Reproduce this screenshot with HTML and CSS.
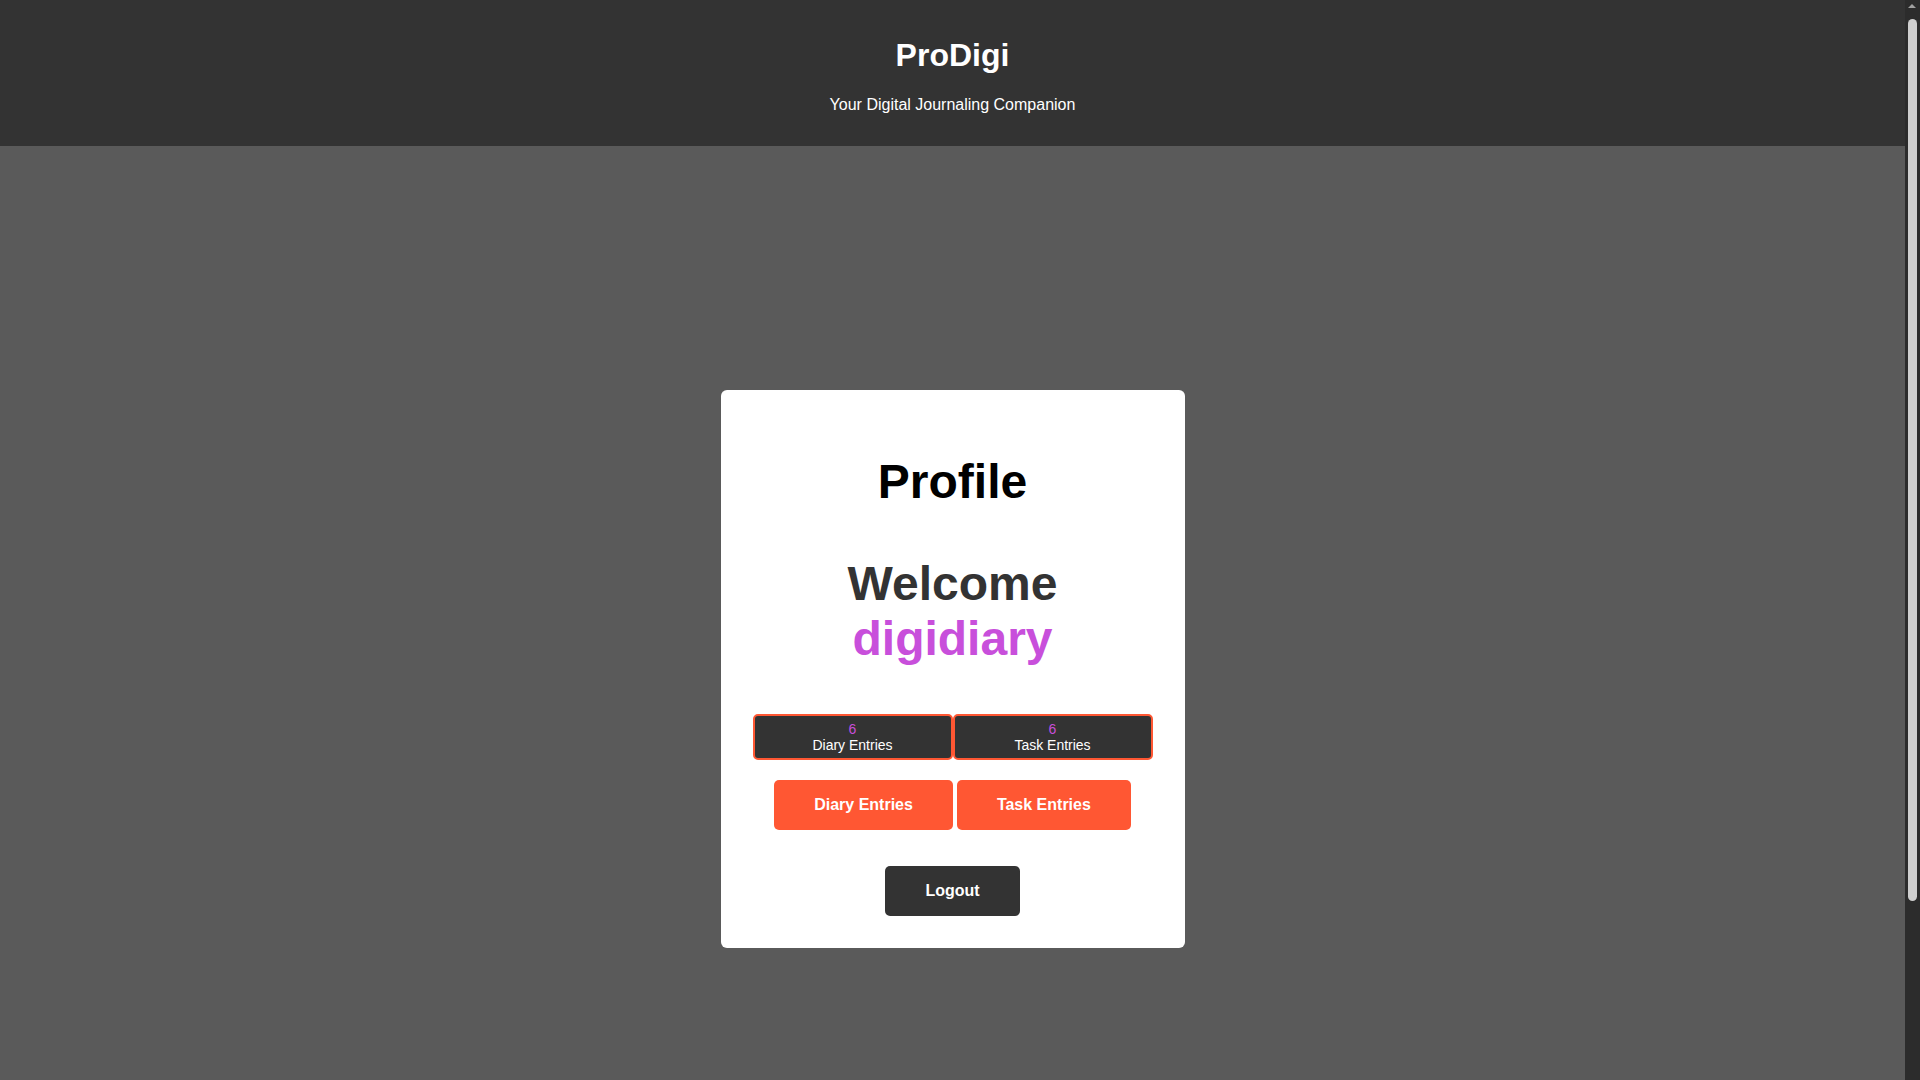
FILE: index.html
```html
<!DOCTYPE html>
<html lang="en">
<head>
<meta charset="utf-8">
<title>ProDigi - Profile</title>
<link rel="stylesheet" href="styles.css">
</head>
<body>
<header class="site-header">
  <h1 class="site-title">ProDigi</h1>
  <p class="site-tagline">Your Digital Journaling Companion</p>
</header>
<main class="main">
  <section class="card">
    <h1 class="card-title">Profile</h1>
    <h2 class="welcome">Welcome<br><span class="username">digidiary</span></h2>
    <div class="stats">
      <div class="stat">
        <span class="stat-count">6</span>
        <span class="stat-label">Diary Entries</span>
      </div>
      <div class="stat">
        <span class="stat-count">6</span>
        <span class="stat-label">Task Entries</span>
      </div>
    </div>
    <div class="actions">
      <button class="btn btn-orange" type="button">Diary Entries</button>
      <button class="btn btn-orange" type="button">Task Entries</button>
    </div>
    <div class="logout-row">
      <button class="btn btn-dark" type="button">Logout</button>
    </div>
  </section>
</main>
</body>
</html>
```
FILE: styles.css
```css
html {
  margin: 0;
  padding: 0;
  background: #2c2c2c;
}

/* scrollbar-like rail on the right edge */
html::after {
  content: "";
  position: fixed;
  top: 19px;
  right: 3px;
  width: 9px;
  height: 882px;
  background: #cfcfcf;
  border-radius: 5px;
}

html::before {
  content: "";
  position: fixed;
  top: 4px;
  right: 4px;
  width: 0;
  height: 0;
  border-left: 4px solid transparent;
  border-right: 4px solid transparent;
  border-bottom: 4px solid #a0a0a0;
}

body {
  margin: 0 15px 0 0;
  padding: 0;
  background: #5a5a5a;
  color: #333;
  font-family: "Liberation Sans", Arial, sans-serif;
}

.site-header {
  background: #333;
  color: #fff;
  text-align: center;
  padding: 16px;
}

.site-title {
  font-size: 32px;
  font-weight: bold;
  margin: 21.44px 0;
}

.site-tagline {
  font-size: 16px;
  margin: 16px 0;
}

.main {
  box-sizing: border-box;
  min-height: calc(100vh + 60px);
  padding-bottom: 93px;
  display: flex;
  align-items: center;
  justify-content: center;
}

.card {
  width: 400px;
  padding: 32px;
  background: #fff;
  border-radius: 6px;
  text-align: center;
  display: flex;
  flex-direction: column;
  align-items: stretch;
}

.card-title {
  font-size: 48px;
  font-weight: bold;
  color: #000;
  margin: 32px 0 0;
}

.welcome {
  font-size: 48px;
  font-weight: bold;
  color: #333;
  margin: 47px 0 48px;
}

.username {
  color: #c84fdb;
}

.stats {
  display: flex;
}

.stat {
  flex: 1;
  background: #333;
  border: 2px solid #ff5733;
  border-radius: 5px;
  padding: 5px;
  display: flex;
  flex-direction: column;
  font-size: 14px;
  color: #fff;
}

.stat-count {
  color: #c84fdb;
}

.actions {
  margin-top: 20px;
  display: flex;
  justify-content: center;
  gap: 4px;
}

.logout-row {
  margin-top: 36px;
  display: flex;
  justify-content: center;
}

.btn {
  font-family: "Liberation Sans", Arial, sans-serif;
  font-size: 16px;
  font-weight: bold;
  line-height: normal;
  color: #fff;
  border: none;
  border-radius: 5px;
  padding: 16px 40px;
  cursor: pointer;
}

.btn-orange {
  background: #ff5733;
}

.btn-dark {
  background: #333;
}
```
